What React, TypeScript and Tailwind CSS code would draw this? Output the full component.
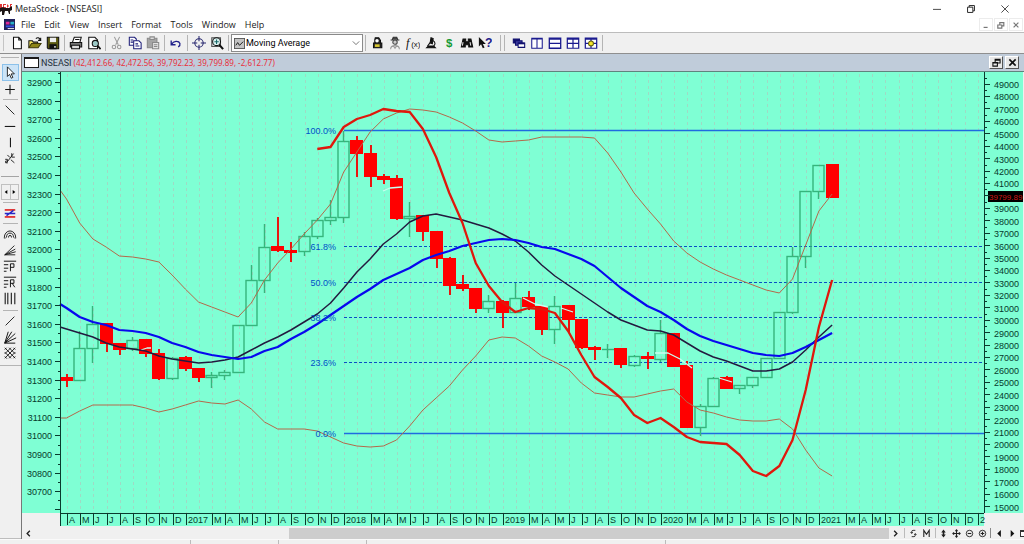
import React from "react";
import type { ReactNode } from "react";

type Candle = [kind: "u" | "d", top: number, bottom: number, high: number, low: number];

const STEP = 13.2;
const FIRST = 67;
const xAt = (i: number) => FIRST + STEP * i;

const CANDLES: Candle[] = [
  ["d", 377, 380, 374, 387], ["u", 348, 380, 331, 380], ["u", 324, 348, 306, 363], ["d", 323, 343, 323, 352],
  ["d", 343, 349, 343, 355], ["u", 340, 348, 337, 351], ["d", 339, 353, 339, 357], ["d", 353, 378, 349, 380],
  ["u", 358, 378, 357, 380], ["d", 357, 368, 356, 371], ["d", 368, 377, 368, 382], ["u", 375, 377, 372, 388],
  ["u", 372, 375, 370, 380], ["u", 325, 372, 325, 372], ["u", 280, 325, 265, 325], ["u", 247, 280, 224, 293],
  ["d", 246, 250, 217, 252], ["d", 250, 252, 242, 262], ["u", 236, 251, 232, 256], ["u", 220, 236, 218, 239],
  ["u", 217, 220, 200, 225], ["u", 141, 217, 131, 223], ["d", 140, 153, 136, 177], ["d", 153, 176, 145, 187],
  ["d", 176, 179, 174, 184], ["d", 178, 218, 175, 220], ["u", 216, 218, 202, 237], ["d", 215, 231, 215, 241],
  ["d", 231, 258, 231, 268], ["d", 258, 285, 257, 295], ["d", 284, 288, 275, 291], ["d", 288, 308, 288, 313],
  ["u", 301, 308, 295, 313], ["d", 301, 312, 300, 328], ["u", 298, 312, 283, 312], ["d", 297, 306, 291, 310],
  ["d", 306, 329, 305, 335], ["u", 306, 329, 296, 344], ["d", 305, 319, 305, 333], ["d", 319, 347, 319, 349],
  ["d", 347, 349, 346, 360], ["u", 349, 349, 344, 358], ["d", 348, 364, 348, 368], ["u", 356, 365, 355, 367],
  ["d", 356, 358, 352, 369], ["u", 333, 359, 320, 362], ["d", 333, 366, 333, 367], ["d", 365, 427, 361, 428],
  ["u", 406, 427, 404, 436], ["u", 378, 406, 377, 407], ["d", 377, 388, 376, 389], ["u", 385, 388, 385, 394],
  ["u", 377, 385, 377, 388], ["u", 358, 377, 358, 377], ["u", 312, 358, 312, 358], ["u", 256, 312, 247, 314],
  ["u", 191, 256, 191, 268], ["u", 165, 191, 165, 199], ["d", 164, 197, 164, 198],
];

const UPPER = [199, 223, 239, 247, 256, 257, 259, 262, 275, 289, 302, 307, 312, 317, 303, 280, 263, 249, 234, 220, 204, 172, 152, 132, 119, 113, 109, 110, 112, 117, 123, 131, 140, 142, 141, 140, 137, 137, 137, 137, 138, 153, 172, 193, 209, 224, 241, 253, 262, 269, 275, 280, 285, 290, 293, 279, 245, 211, 194];
const LOWER = [418, 411, 405, 405, 405, 405, 408, 412, 409, 405, 401, 403, 404, 400, 409, 422, 429, 429, 429, 431, 437, 443, 446, 447, 446, 440, 426, 410, 398, 386, 370, 356, 340, 337, 338, 346, 356, 362, 369, 383, 393, 395, 397, 397, 394, 391, 389, 402, 410, 413, 417, 420, 421, 421, 419, 429, 450, 468, 476];
const BLUE = [308, 317, 322, 325, 330, 331, 333, 337, 343, 347, 352, 355, 357, 359, 357, 351, 347, 339, 332, 324, 315, 306, 297, 289, 280, 274, 268, 260, 255, 251, 246, 243, 240, 239, 240, 243, 247, 249, 254, 259, 266, 277, 288, 297, 306, 312, 320, 329, 336, 341, 345, 349, 353, 355, 356, 353, 347, 340, 333];
const DARK = [329, 333, 337, 343, 347, 349, 351, 356, 359, 361, 363, 362, 360, 357, 350, 343, 337, 330, 322, 314, 303, 288, 272, 259, 244, 234, 222, 216, 214, 217, 220, 224, 228, 234, 241, 252, 265, 276, 285, 294, 303, 312, 320, 325, 330, 331, 335, 343, 351, 357, 361, 366, 371, 371, 369, 362, 350, 337, 325];
const RED = [149, 147, 127, 119, 115, 109, 111, 112, 129, 157, 193, 223, 263, 286, 302, 312, 308, 309, 313, 331, 355, 377, 387, 398, 415, 423, 418, 427, 437, 442, 443, 444, 455, 471, 476, 466, 440, 390, 327, 280];

const line = (ys: number[], from = 0, lead = "") =>
  lead + " " + ys.map((y, i) => `${(xAt(i + from) - 0.5).toFixed(1)},${y}`).join(" ");

const FIB = [
  { label: "100.0%", y: 130, solid: true },
  { label: "61.8%", y: 246, solid: false },
  { label: "50.0%", y: 282, solid: false },
  { label: "38.2%", y: 317, solid: false },
  { label: "23.6%", y: 362, solid: false },
  { label: "0.0%", y: 433, solid: true },
];

const MONTHS = "JFMAMJJASOND";
const LEFT_LABELS = Array.from({ length: 23 }, (_, i) => 32900 - i * 100);
const RIGHT_LABELS = Array.from({ length: 35 }, (_, i) => 49000 - i * 1000);
const COLUMNS = Array.from({ length: 70 }, (_, i) => i);

function monthLabel(i: number) {
  const m = (i + 3) % 12;
  if (i === 69) return "2";
  if (m === 1) return "";
  if (m === 0) return String(2016 + Math.floor((i + 3) / 12));
  return MONTHS[m];
}

function PriceChart() {
  return (
    <svg viewBox="22 72 1002 454" className="block h-auto w-full" role="img" aria-label="NSEASI monthly candlestick chart">
      <rect x="22" y="72" width="1001" height="441" fill="#7fffd4" />
      <rect x="60" y="513" width="924" height="13" fill="#7fffd4" />
      <g stroke="#9fdac4" strokeWidth="1" strokeDasharray="3 3">
        {COLUMNS.map((i) => {
          const x = Math.round(xAt(i)) + 0.5;
          return <line key={i} x1={x} x2={x} y1="74" y2="513" />;
        })}
      </g>

      {FIB.map((f) => (
        <path
          key={f.label}
          d={`M344 ${f.y + 0.5}H984`}
          strokeDasharray={f.solid ? undefined : "3 2"}
          stroke={f.solid ? "#1f6be0" : "#0a4fc4"}
          strokeWidth={f.solid ? 1.4 : 1}
        />
      ))}

      {CANDLES.map(([kind, top, bottom, high, low], i) => {
        const x = Math.round(xAt(i));
        if (kind === "d")
          return (
            <g key={i} fill="#ff0000">
              <rect x={x - 1} y={high} width="2" height={low - high} fill="#ea1410" />
              <rect x={x - 7} y={top} width="13" height={bottom - top + 1} />
            </g>
          );
        return (
          <g key={i} stroke="#36b57c" strokeWidth="1.4" fill="none">
            <path d={`M${x - 0.5} ${high}V${top}M${x - 0.5} ${bottom}V${low}`} />
            {bottom > top ? <rect x={x - 6} y={top + 0.5} width="11" height={bottom - top} /> : <path d={`M${x - 6} ${top + 0.5}h12`} />}
          </g>
        );
      })}

      <g fill="none" strokeLinejoin="round">
        <g stroke="#c9fff0" strokeWidth="1.3">
          <polyline points="141,350 147,348 151,348" />
          <polyline points="383,191 390,188 402,187" />
          <polyline points="523,298 535,304 548,307" />
          <polyline points="561,308 573,312" />
          <polyline points="655,353 668,353 680,359 692,368" />
          <polyline points="719,378 732,382" />
        </g>
        <polyline points={line(UPPER, 0, "60,190")} stroke="#b4694a" strokeWidth="1" />
        <polyline points={line(LOWER, 0, "60,418")} stroke="#b4694a" strokeWidth="1" />
        <polyline points={line(DARK, 0, "60,327")} stroke="#231a3f" strokeWidth="1.5" />
        <polyline points={line(BLUE, 0, "60,304")} stroke="#0808ee" strokeWidth="2.2" />
        <polyline points={line(RED, 19)} stroke="#e0170c" strokeWidth="2.3" />
      </g>

      <g fontFamily="'Liberation Sans', Arial, sans-serif" fontSize="9">
        <g fill="#0050c8" textAnchor="end">
          {FIB.map((f) => (
            <text key={f.label} x="336" y={f.y + 4}>{f.label}</text>
          ))}
        </g>
        <g fill="#063a2c">
          {LEFT_LABELS.map((v, i) => (
            <text key={v} x="52" y={Math.round(83 + i * 18.6) + 3} textAnchor="end">{v}</text>
          ))}
          {RIGHT_LABELS.map((v, i) =>
            v === 40000 ? null : (
              <text key={v} x="994" y={Math.round(84 + i * 12.43) + 4}>{v}</text>
            ),
          )}
          {COLUMNS.map((i) => (
            <text key={i} x={Math.round(xAt(i)) + 2} y="523">{monthLabel(i)}</text>
          ))}
        </g>
        <rect x="988" y="191" width="35" height="11" fill="#000" />
        <text x="989" y="200" fill="#d01818" fontSize="8">39799.89</text>
      </g>

      <g stroke="#0a3a2d" strokeWidth="1">
        <path d="M60.5 72V526M984.5 72V513M60 513.5H984" />
        {LEFT_LABELS.map((v, i) => {
          const y = Math.round(82 + i * 18.6) + 0.5;
          return <path key={v} d={`M55 ${y}H60M58 ${y - 9}H60`} />;
        })}
        <path d="M58 500.5H60M55 509.5H60" />
        {RIGHT_LABELS.map((v, i) => {
          const y = Math.round(83.5 + i * 12.43) + 0.5;
          return <path key={v} d={`M984 ${y}H990M984 ${y - 6}H987`} />;
        })}
        {COLUMNS.filter((i) => (i + 3) % 12 !== 1).map((i) => {
          const x = Math.round(xAt(i)) + 0.5;
          return <path key={i} d={`M${x} 513V525`} />;
        })}
      </g>
    </svg>
  );
}

function Glyph({ children }: { children: ReactNode }) {
  return (
    <svg viewBox="0 0 16 16" className="size-[14px]" fill="none" stroke="#111" strokeWidth="1.2" aria-hidden="true">
      {children}
    </svg>
  );
}

function ToolButton({ label, children }: { label: string; children: ReactNode }) {
  return (
    <button type="button" aria-label={label} title={label} className="flex h-4 w-[18px] shrink-0 items-center justify-center">
      <Glyph>{children}</Glyph>
    </button>
  );
}

function Sep({ double = false }: { double?: boolean }) {
  return (
    <span className={double ? "flex w-4 shrink-0 justify-center gap-[3px]" : "flex w-[5px] shrink-0 justify-center"}>
      <span className="h-4 w-px bg-[#b4b4b4]" />
      {double && <span className="h-4 w-px bg-[#b4b4b4]" />}
    </span>
  );
}

function Toolbar() {
  return (
    <div className="flex h-[22px] items-center overflow-hidden border-y border-t-[#bcbcbc] border-b-[#8f8f8f] bg-[#f0f0f0] pl-[3px]">
      <span className="mr-1 h-4 w-px bg-[#c4c4c4]" />
      <ToolButton label="New"><path d="M4 1.5h6l3 3v10H4zM10 1.5v3h3" fill="#fff" /></ToolButton>
      <ToolButton label="Open">
        <path d="M1 13.5v-8h4l1 1.5h5v2.500" fill="#f5e663" />
        <path d="M1 13.500l3-5h11l-3.500 5z" fill="#8c8416" stroke="#3e3a08" />
        <path d="M9 3c2-2 4-1 5 1.500M14.500 2v3h-3" />
      </ToolButton>
      <ToolButton label="Save">
        <path d="M1.500 1.500h13v13h-12l-1-1z" fill="#5c5a10" />
        <path d="M4.500 2h7v5h-7z" fill="#eee" stroke="none" />
        <path d="M4.500 10h7v4.500h-7z" fill="#111" />
        <path d="M9.500 11.500h1.500v2H9.500z" fill="#fff" stroke="none" />
      </ToolButton>
      <Sep />
      <ToolButton label="Print">
        <path d="M4 7l2-5.500h8L12.500 7" fill="#fff" />
        <path d="M1.500 7.500h13v5h-13z" fill="#777" />
        <path d="M3 10.500h9v4H3z" fill="#ddd" />
        <path d="M7 4h5" />
      </ToolButton>
      <ToolButton label="Print preview">
        <path d="M2 1.500h7l3 3v10H2z" fill="#fff" />
        <circle cx="9.500" cy="8.500" r="3.500" fill="#9cc9c6" />
        <path d="M12 11l3.500 4" strokeWidth="2" />
      </ToolButton>
      <Sep />
      <ToolButton label="Cut">
        <g stroke="#999"><path d="M5 1l4.500 9M11 1L6.500 10" /><circle cx="4.500" cy="12.500" r="2" /><circle cx="10.500" cy="12.500" r="2" /></g>
      </ToolButton>
      <ToolButton label="Copy">
        <g stroke="#1d1d78"><path d="M1.500 1.500h6l2 2v7h-8z" fill="#fff" /><path d="M6.500 5.500h6l2.500 2.500v6.500H6.500z" fill="#fff" /><path d="M3 4.500h3M3 7h3M8.500 9h3M8.500 11.500h4.500" /></g>
      </ToolButton>
      <ToolButton label="Paste">
        <g stroke="#8a8a8a"><path d="M1.500 2.500h11v11h-11z" fill="#a5a5a5" /><path d="M4.500 1h5v3h-5z" fill="#ddd" /><path d="M7.500 7.500h7v7h-7z" fill="#e4e4e4" /><path d="M9 10h4M9 12h4" /></g>
      </ToolButton>
      <Sep />
      <ToolButton label="Undo"><path d="M2.500 5v5h5M3 9.500c2-4 8-4.500 9.500-1 .5 1.800-.5 3-2 4" stroke="#20208a" strokeWidth="1.500" /></ToolButton>
      <Sep />
      <ToolButton label="Crosshair">
        <g stroke="#26266e"><circle cx="8" cy="8" r="4.800" /><path d="M8 0v6M8 10v6M0 8h6M10 8h6" /></g>
      </ToolButton>
      <ToolButton label="Zoom">
        <path d="M2 2h10v10H2z" fill="#cfd8d8" stroke="#555" />
        <circle cx="7.500" cy="6.500" r="4.500" fill="#d9f0ee" />
        <path d="M5 6.500h5M7.500 4v5" stroke="#186868" />
        <path d="M10.500 10l4.500 5" strokeWidth="2.400" />
      </ToolButton>
      <Sep />
      <div className="flex h-[18px] w-[132px] shrink-0 items-center border border-[#8a8a8a] bg-white pl-[2px]">
        <svg viewBox="0 0 12 12" className="size-[11px] shrink-0" fill="none" aria-hidden="true">
          <rect x="0.500" y="0.500" width="11" height="11" fill="#c4c4c4" stroke="#555" />
          <path d="M2 8l2-3 2 3 4-4" stroke="#111" />
        </svg>
        <select aria-label="Indicator" className="h-4 min-w-0 flex-1 appearance-none bg-white pl-px font-['Roboto','Liberation_Sans',sans-serif] text-[9px] leading-4 text-black outline-none">
          <option>Moving Average</option>
        </select>
        <svg viewBox="0 0 10 10" className="pointer-events-none mr-[2px] size-2 shrink-0" fill="none" stroke="#555" aria-hidden="true"><path d="M1 3l4 4 4-4" /></svg>
      </div>
      <Sep />
      <ToolButton label="Expert advisor">
        <path d="M6 2h4l2 3v3h1.500v5.500H4V8h1.500V4z" fill="#222" />
        <circle cx="8" cy="5.500" r="2" fill="#fff" stroke="none" />
        <path d="M5.500 9.500h5.500v3H5.500z" fill="#d8c832" stroke="none" />
      </ToolButton>
      <ToolButton label="Explorer">
        <path d="M3 4.500h10M5 4l1-2.500h4L11 4" fill="#444" stroke="#333" />
        <circle cx="8" cy="7" r="2.500" fill="#ccc" stroke="#444" />
        <path d="M3 15c0-3 2-4 5-4s5 1 5 4M6 11l2 3 2-3" stroke="#999" />
      </ToolButton>
      <ToolButton label="Indicator builder">
        <text x="0" y="12" fontSize="14" fontStyle="italic" fontFamily="Liberation Serif, serif" fill="#111" stroke="none">f</text>
        <text x="6" y="13" fontSize="9" fontFamily="Liberation Sans, sans-serif" fill="#111" stroke="none">(x)</text>
      </ToolButton>
      <ToolButton label="System tester">
        <path d="M8 2l2.500 1-1 6-2.500-1zM3 13.500h10l-2-2H5z" fill="#111" /><path d="M7 7.500l-3 4M10 5c3.500 2 3 4.500 1 6.500" />
      </ToolButton>
      <ToolButton label="Downloader"><text x="4.500" y="13" fontSize="13" fontWeight="700" fontFamily="Liberation Sans, sans-serif" fill="#179a34" stroke="none">$</text></ToolButton>
      <ToolButton label="Find">
        <path d="M3.500 3.500h3v3h3v-3h3l2 9h-4.500V10h-4v2.500H1.500z" fill="#111" /><path d="M3.500 7l-.8 4M11.500 7l.8 4" stroke="#ddd" />
      </ToolButton>
      <ToolButton label="Context help">
        <path d="M1 1v11l2.500-2.500L5.500 14l2-1-2-4H9z" fill="#111" stroke="none" />
        <text x="8" y="12" fontSize="14" fontWeight="700" fontFamily="Liberation Sans, sans-serif" fill="#20208a" stroke="none">?</text>
      </ToolButton>
      <Sep double />
      <ToolButton label="Cascade windows">
        <g stroke="#10106e"><path d="M1.500 3.500h7v4.500h-7z" fill="#10106e" /><path d="M4 5.500h7.500v5H4z" fill="#3a3a9c" /><path d="M7 8h7.500v5H7z" fill="#fff" /><path d="M7 8.500h7.500" strokeWidth="2" /></g>
      </ToolButton>
      <ToolButton label="Tile columns"><path d="M2 2.500h12v11.500H2zM8 2.500V14M2 3.500h12" stroke="#1b1b8f" strokeWidth="1.200" fill="#fff" /></ToolButton>
      <ToolButton label="Tile rows"><path d="M1.500 2.500h13v11.500h-13zM1.500 3.500h13M1.500 8.500h13" stroke="#1b1b8f" strokeWidth="1.500" fill="#fff" /></ToolButton>
      <ToolButton label="Tile grid"><path d="M1.500 2.500h13v11.500h-13zM1.500 3.500h13M1.500 8.500h13M8 2.500V14" stroke="#1b1b8f" strokeWidth="1.400" fill="#fff" /></ToolButton>
      <ToolButton label="Save layout">
        <path d="M1.500 2.500h13v11.500h-13zM1.500 3.500h13M1.500 8.500h13M8 2.500V14" stroke="#1b1b8f" strokeWidth="1.400" fill="#fff" />
        <circle cx="8" cy="8.500" r="2.800" fill="#f4e52a" stroke="#666008" />
      </ToolButton>
      <Sep />
    </div>
  );
}

function SideButton({ label, active = false, children }: { label: string; active?: boolean; children: ReactNode }) {
  return (
    <button
      type="button"
      aria-label={label}
      title={label}
      className={active ? "flex h-[17px] w-[17px] items-center justify-center border border-[#8cc1ea] bg-[#cce4f7]" : "flex h-4 w-[17px] items-center justify-center"}
    >
      <Glyph>{children}</Glyph>
    </button>
  );
}

const SideRule = () => <span className="my-[2px] h-px w-[15px] bg-[#b4b4b4]" />;

function SideBar() {
  return (
    <div className="flex w-[21px] shrink-0 flex-col items-center border-b border-[#bdbdbd] bg-[#f0f0f0] pr-px">
      <span className="mt-[3px] mb-[6px] h-px w-[18px] bg-[#b4b4b4]" />
      <SideButton label="Pointer" active><path d="M5 1v11l2.500-2.500L9.500 14l1.800-1-2-4H13z" fill="#fff" strokeWidth="1" /></SideButton>
      <SideButton label="Crosshair"><path d="M8 3v11M2.500 8.500h11" /></SideButton>
      <SideRule />
      <SideButton label="Trendline down"><path d="M3 3l10 10" strokeWidth="1" /></SideButton>
      <SideButton label="Horizontal line"><path d="M2 8.500h12" /></SideButton>
      <SideButton label="Vertical line"><path d="M8.500 3v11" /></SideButton>
      <SideButton label="Semi-log line">
        <path d="M4 13.500L12 3M10 2.500v4.500h3.500M5 4.500l3 3M2.500 9.500H5v2H3v2h2.500M9 10l4 3.500" strokeWidth="1" />
      </SideButton>
      <span className="mt-[10px] mb-[7px] h-px w-[18px] bg-[#a4a4a4]" />
      <div className="flex h-4 w-[18px] items-center border border-[#c0c0c0]">
        <button type="button" aria-label="Previous" className="flex h-full flex-1 items-center justify-center border-r border-[#c0c0c0]">
          <svg viewBox="0 0 6 6" className="size-1"><path d="M5 0v6L1 3z" /></svg>
        </button>
        <button type="button" aria-label="Next" className="flex h-full flex-1 items-center justify-center">
          <svg viewBox="0 0 6 6" className="size-1"><path d="M1 0v6l4-3z" /></svg>
        </button>
      </div>
      <SideRule />
      <SideButton label="Regression lines">
        <path d="M2 4.500h12" stroke="#e01818" strokeWidth="1.800" /><path d="M2 8.500h12M4 11l8-6" stroke="#2828c8" strokeWidth="1.600" /><path d="M2 12.500h12" stroke="#e01818" strokeWidth="1.800" />
      </SideButton>
      <SideRule />
      <SideButton label="Fibonacci arcs"><path d="M1.500 12a6.500 7.500 0 0113 0M4 12a4 5 0 018 0M6.300 12a1.700 2.500 0 013.400 0M1 12.500h2M13 12.500h2" strokeWidth="1" /></SideButton>
      <SideButton label="Fibonacci fan"><path d="M2 13.500L13 3M2 13.500L14 7M2 13.500L14.500 10M2 13.500h12" strokeWidth="1" /></SideButton>
      <SideButton label="Fibonacci projection"><path d="M1 2.500h14M1 6.500h5M1 10.500h5M1 14h3M8.500 14V5.500h4v4h-4" strokeWidth="1.100" /></SideButton>
      <SideButton label="Fibonacci retracement"><path d="M1 2.500h14M1 6.500h5M1 10.500h5M1 14h3M8.500 14V5.500h4v4h-4M10.500 9.500l3 4.500" strokeWidth="1.100" /></SideButton>
      <SideButton label="Time zones"><path d="M2.500 2v13M5.500 2v13M9.500 2v13M13.500 2v13" /></SideButton>
      <span className="mt-1 mb-[2px] h-px w-[15px] bg-[#b4b4b4]" />
      <SideButton label="Gann line"><path d="M3 13L13 3" strokeWidth="1" /></SideButton>
      <SideButton label="Gann fan"><path d="M2 15L6 2M2 15L10 2M2 15L14 4M2 15L15 9M2 15h12" strokeWidth="1.100" /></SideButton>
      <SideButton label="Gann grid"><path d="M2 2l12 12M2 7l7 7M7 2l7 7M2 12l2.500 2.500M12 2l2 2M14 2L2 14M9 2L2 9M14 7l-7 7M4 2L2 4M14 12l-2 2" strokeWidth="1" /></SideButton>
      <span className="mt-1 h-px w-[21px] bg-[#b4b4b4]" />
    </div>
  );
}

function BottomIcon({ label, children }: { label: string; children: ReactNode }) {
  return (
    <button type="button" aria-label={label} className="flex h-3 w-[13px] shrink-0 items-center justify-center">
      <svg viewBox="0 0 10 10" className="size-[9px]" fill="none" stroke="#222" strokeWidth="1.200" aria-hidden="true">{children}</svg>
    </button>
  );
}

function ScrollRow() {
  return (
    <div className="mt-px flex h-3 items-center overflow-hidden">
      <BottomIcon label="Scroll left"><path d="M6.500 2L3.500 5l3 3" strokeWidth="1.500" /></BottomIcon>
      <div className="flex h-full min-w-0 flex-1 items-center pl-[254px]">
        <div className="h-[11px] flex-1 bg-[#cdcdcd]" />
      </div>
      <BottomIcon label="Scroll right"><path d="M3.500 2l3 3-3 3" strokeWidth="1.500" /></BottomIcon>
      <span className="mx-[2px] h-[10px] w-px bg-[#bbb]" />
      <BottomIcon label="Refresh"><path d="M7 1.500H4.500c-1 0-1.500.7-1.500 1.500v1.500M3 8.500h2.500c1 0 1.500-.7 1.500-1.500V5.500M1.800 3.500L3 5l1.200-1.500M5.800 6.500L7 5l1.200 1.500" strokeWidth="1" /></BottomIcon>
      <BottomIcon label="Monthly"><path d="M2 9V1.500L5 6l3-4.500V9" strokeWidth="1.200" /></BottomIcon>
      <span className="mr-px ml-[2px] h-[10px] w-px bg-[#bbb]" />
      <BottomIcon label="Fit vertically"><path d="M5 .5l2.500 3.500h-5zM5 9.500L7.500 6h-5z" fill="#222" stroke="none" /><path d="M5 3v4" strokeWidth="1.800" /></BottomIcon>
      <BottomIcon label="Move"><path d="M5 1v8M1 5h8M3.800 2.300L5 1l1.200 1.300M3.800 7.700L5 9l1.200-1.300M2.300 3.800L1 5l1.300 1.200M7.700 3.800L9 5 7.700 6.200" /></BottomIcon>
      <BottomIcon label="Zoom out"><circle cx="5" cy="5" r="3.600" strokeWidth="1" /><path d="M3 5h4" /></BottomIcon>
      <BottomIcon label="Zoom in"><circle cx="5" cy="5" r="3.600" strokeWidth="1" /><path d="M3 5h4M5 3v4" /></BottomIcon>
      <span className="mr-[2px] ml-px h-[10px] w-px bg-[#888]" />
      <BottomIcon label="Previous security"><path d="M6.500 1v8L2.500 5z" fill="#111" stroke="none" /></BottomIcon>
      <BottomIcon label="Next security"><path d="M3 1v8l4-4z" fill="#111" stroke="none" /></BottomIcon>
      <button type="button" aria-label="Show list" className="-mr-1 ml-px flex h-[7px] w-2 shrink-0 border border-t-2 border-[#333] bg-white" />
    </div>
  );
}

const MENUS = ["File", "Edit", "View", "Insert", "Format", "Tools", "Window", "Help"];

export default function App() {
  return (
    <div className="flex min-h-screen flex-col overflow-hidden bg-[#f0f0f0] font-['Open_Sans','Noto_Sans',sans-serif] text-[9px] leading-3 text-[#222]">
      <header className="flex h-[17px] items-center bg-white">
        <svg viewBox="0 0 13 12" className="mr-[2px] h-3 w-[13px]" aria-hidden="true">
          <path d="M0 1h2v4H0zM3 1h3v1H4v2h2v1H3zM7 1l2 2-2 2M10 1h2v1h-1v3h-1z" fill="#e03434" />
          <path d="M0 5l3-1 2 1h4l3-2v4l-2 1v3H9L8 8H5l-1 4H2V8L0 9z" fill="#1c1414" />
        </svg>
        <h1 className="flex-1">MetaStock - [NSEASI]</h1>
        <div className="flex items-center pr-[11px]">
          <button type="button" aria-label="Minimize" className="flex w-[34px] justify-center"><svg viewBox="0 0 10 10" className="size-2" stroke="#222" fill="none"><path d="M0 5.500h10" /></svg></button>
          <button type="button" aria-label="Restore" className="flex w-[34px] justify-center"><svg viewBox="0 0 10 10" className="size-2" stroke="#222" fill="none" strokeWidth="1.200"><path d="M.7 2.700h6.600v6.600H.7zM2.700 2.500V.7h6.600v6.600H7.500" /></svg></button>
          <button type="button" aria-label="Close" className="ml-[9px] flex w-4 justify-center"><svg viewBox="0 0 10 10" className="size-2" stroke="#222" fill="none"><path d="M.5.5l9 9M9.500.5l-9 9" /></svg></button>
        </div>
      </header>

      <div className="flex h-[15px] items-center bg-white pl-1">
        <svg viewBox="0 0 12 12" className="mr-[6px] size-[11px]" aria-hidden="true">
          <path d="M0 0h12v12H0z" fill="#20205a" />
          <path d="M2 3h4v3H2z" fill="#e02898" /><path d="M7 3h4v3H7z" fill="#28b0c8" /><path d="M2 7h9v2H2z" fill="#3450e0" /><path d="M4 10h7v1H4z" fill="#fff" />
        </svg>
        <nav className="flex flex-1 gap-[9px]">
          {MENUS.map((m) => (
            <button key={m} type="button">{m}</button>
          ))}
        </nav>
        <div className="flex gap-px pr-px">
          {["M2 8h5", "M1 5h5v4H1zM3.500 5V2h5v4H6", "M2 2l6 6M8 2L2 8"].map((d, i) => (
            <button key={d} type="button" aria-label={["Minimize chart", "Restore chart", "Close chart"][i]} className="flex h-[13px] w-[14px] items-center justify-center border border-[#ececec]">
              <svg viewBox="0 0 10 10" className="size-2" stroke="#777" strokeWidth="1.500" fill="none"><path d={d} /></svg>
            </button>
          ))}
        </div>
      </div>

      <Toolbar />

      <div className="flex min-w-0">
        <SideBar />
        <main className="min-w-0 flex-1 border-l border-[#777]">
          <div className="flex h-[18px] items-center border-b border-[#60837d] bg-[#c0ccda] pl-[2px]">
            <span className="mr-[2px] h-[11px] w-[15px] border border-t-2 border-[#1a1a1a] bg-white" />
            <h2 className="mr-[2px] font-['Roboto',sans-serif] text-[#26303c]">NSEASI</h2>
            <p className="flex-1 whitespace-nowrap font-['Noto_Sans',sans-serif] text-[8px] text-[#e8303c]">(42,412.66, 42,472.56, 39,792.23, 39,799.89, -2,612.77)</p>
            <div className="flex gap-[2px] pr-[5px]">
              <button type="button" aria-label="Restore window" className="flex h-[13px] w-[14px] items-center justify-center border border-t-white border-l-white border-r-[#555] border-b-[#555] bg-[#e8e8e8]">
                <svg viewBox="0 0 10 10" className="size-[9px]" fill="none" stroke="#111" strokeWidth="1.200"><path d="M1 5h5v4H1zM3.500 5V1.500h5.500v4H6M3.500 2.500H9M1 5.500h5" /></svg>
              </button>
              <button type="button" aria-label="Close window" className="flex h-[13px] w-[14px] items-center justify-center border border-t-white border-l-white border-r-[#555] border-b-[#555] bg-[#e8e8e8]">
                <svg viewBox="0 0 10 10" className="size-[9px]" fill="none" stroke="#111" strokeWidth="1.800"><path d="M1.500 1.500l7 7M8.500 1.500l-7 7" /></svg>
              </button>
            </div>
          </div>
          <PriceChart />
          <ScrollRow />
        </main>
      </div>

      <footer className="flex flex-1 border-t border-[#fafafa]">
        <span className="w-[191px] border-r border-[#bbb]" />
        <span className="w-[88px] border-r border-[#bbb]" />
        <span className="w-[88px] border-r border-[#bbb]" />
        <span className="w-[299px] border-r border-[#bbb]" />
      </footer>
    </div>
  );
}
